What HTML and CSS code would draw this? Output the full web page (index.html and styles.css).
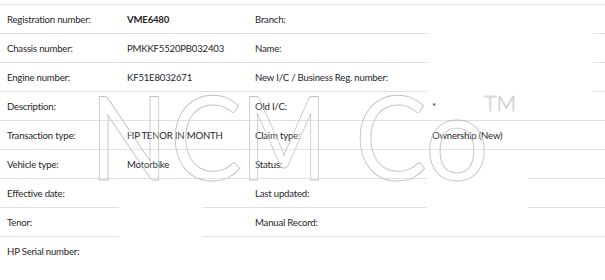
FILE: index.html
```html
<!DOCTYPE html>
<html>
<head>
<meta charset="utf-8">
<link rel="stylesheet" href="styles.css">
</head>
<body>
<div class="sheet">
  <table class="info">
    <colgroup>
      <col class="c1"><col class="c2"><col class="c3"><col class="c4">
    </colgroup>
    <tr><td>Registration number:</td><td class="strong">VME6480</td><td>Branch:</td><td></td></tr>
    <tr><td>Chassis number:</td><td>PMKKF5520PB032403</td><td>Name:</td><td></td></tr>
    <tr><td>Engine number:</td><td>KF51E8032671</td><td>New I/C / Business Reg. number:</td><td></td></tr>
    <tr><td>Description:</td><td></td><td>Old I/C:</td><td>*</td></tr>
    <tr><td>Transaction type:</td><td>HP TENOR IN MONTH</td><td>Claim type:</td><td>Ownership (New)</td></tr>
    <tr><td>Vehicle type:</td><td>Motorbike</td><td>Status:</td><td></td></tr>
    <tr><td>Effective date:</td><td></td><td>Last updated:</td><td></td></tr>
    <tr><td>Tenor:</td><td></td><td>Manual Record:</td><td></td></tr>
    <tr><td>HP Serial number:</td><td></td><td></td><td></td></tr>
  </table>
  <div class="mask mask-a"></div>
  <div class="mask mask-b"></div>
  <div class="mask mask-c"></div>
  <svg class="watermark" width="605" height="280" viewBox="0 0 605 280">
    <g class="wm">
      <text x="90" y="180" textLength="78" lengthAdjust="spacingAndGlyphs">N</text>
      <text x="170" y="180" textLength="72" lengthAdjust="spacingAndGlyphs">C</text>
      <text x="241" y="180" textLength="86" lengthAdjust="spacingAndGlyphs">M</text>
      <text x="355" y="180" textLength="72" lengthAdjust="spacingAndGlyphs">C</text>
      <text x="425" y="180" textLength="64" lengthAdjust="spacingAndGlyphs">o</text>
      <text class="tm" x="484" y="111" textLength="32" lengthAdjust="spacingAndGlyphs">TM</text>
    </g>
  </svg>
</div>
</body>
</html>
```
FILE: styles.css
```css
html, body {
  margin: 0;
  padding: 0;
  background: #ffffff;
}
body {
  font-family: "Lato", "Open Sans", "Liberation Sans", sans-serif;
  font-size: 9.6px;
  color: #262626;
}
.sheet {
  position: relative;
  width: 605px;
  height: 280px;
  padding-top: 4px;
  box-sizing: border-box;
  overflow: hidden;
}
.info {
  width: 605px;
  border-collapse: collapse;
  table-layout: fixed;
}
.c1 { width: 120px; }
.c2 { width: 128px; }
.c3 { width: 177px; }
.c4 { width: 180px; }
.info tr {
  height: 29px;
}
.info td {
  border-top: 1px solid #e0e0e0;
  padding: 0 0 0 7px;
  height: 28px;
  vertical-align: middle;
  white-space: nowrap;
  letter-spacing: -0.2px;
}
.info td.strong {
  font-weight: 700;
}
.mask {
  position: absolute;
  background: #ffffff;
}
.mask-a { left: 427px; top: 6px; width: 166px; height: 87px; }
.mask-b { left: 427px; top: 170px; width: 101px; height: 42px; }
.mask-c { left: 119px; top: 182px; width: 84px; height: 58px; }
.watermark {
  position: absolute;
  left: 0;
  top: 0;
  pointer-events: none;
}
.wm text {
  font-family: "Lato", "DejaVu Sans", sans-serif;
  font-weight: 400;
  font-size: 116px;
  fill: rgba(255, 255, 255, 0.15);
  stroke: #c2c2c2;
  stroke-width: 0.9;
}
.wm text.tm {
  font-size: 22px;
  font-weight: 300;
  stroke-width: 0.6;
}
```
